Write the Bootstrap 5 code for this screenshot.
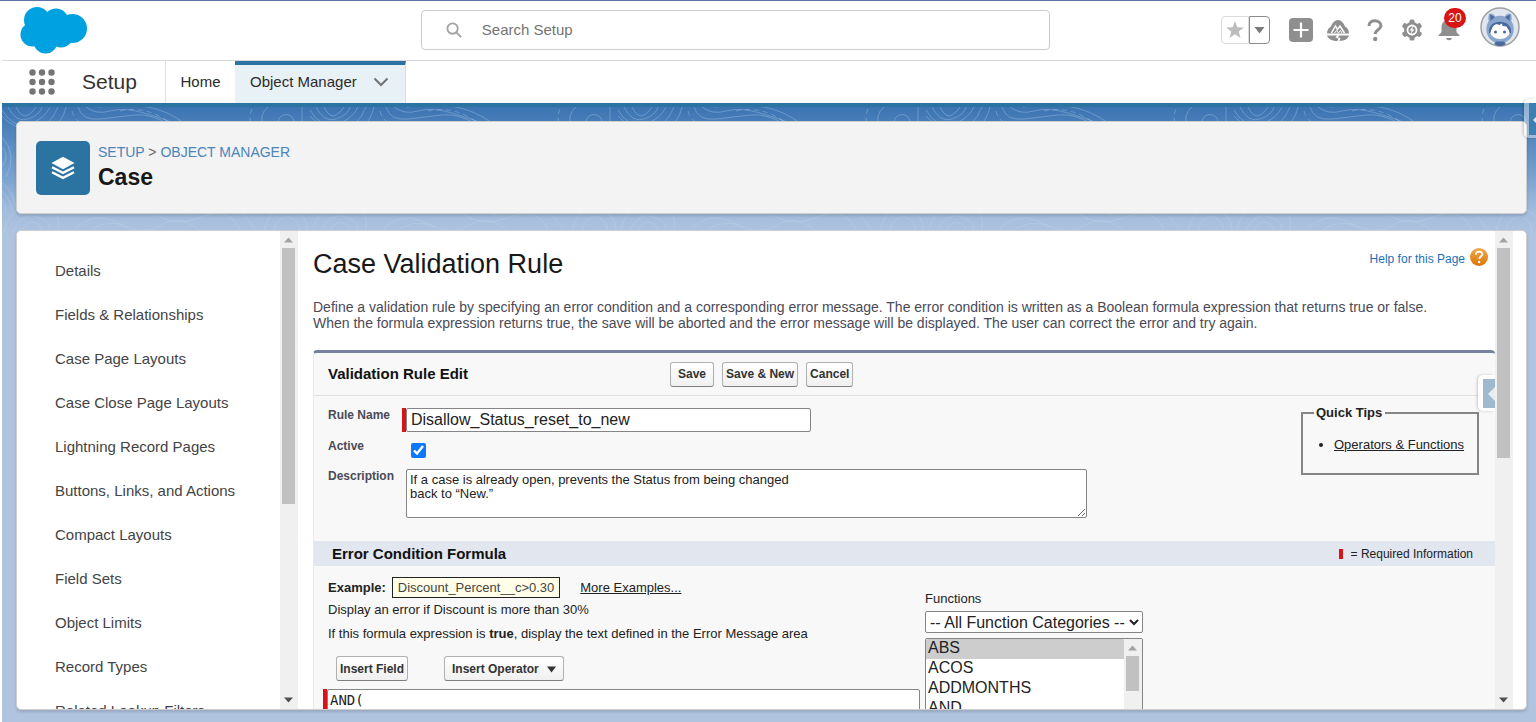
<!DOCTYPE html>
<html lang="en">
<head>
<meta charset="utf-8">
<meta name="viewport" content="width=device-width, initial-scale=1">
<title>Case Validation Rule</title>
<link href="https://cdn.jsdelivr.net/npm/bootstrap@5.3.0/dist/css/bootstrap.min.css" rel="stylesheet">
<style>
  body { font-family: "Liberation Sans", Arial, sans-serif; font-size: 13px; line-height: 16px; color: #222; background: #fff; }
  .app { height: 100vh; min-height: 600px; border-top: 1px solid #5f72a2; }
  .stage { margin-left: 2px; min-height: 0; }

  .topbar { display: grid; grid-template-columns: 27.3% 41% 1fr; height: 60px; flex-shrink: 0; border-bottom: 1px solid #d8d8d8; }
  .cloud { width: 70px; height: 50px; margin: 4px 0 0 17px; }
  .searchbox { height: 40px; margin-top: 9px; border: 1px solid #cbcbcb; border-radius: 4px; padding: 0 24px; }
  .searchbox input { border: 0; outline: 0; font-size: 15px; color: #555; }
  .searchbox input::placeholder { color: #747474; opacity: 1; }
  .tools { padding: 6px 16px 0 0; height: 46px; }
  .tools button, .launcher { border: 0; background: none; padding: 0; }
  .tools .tool { width: 37px; height: 40px; padding-top: 6px; line-height: 0; }
  .tools .favs { padding: 6px 12px 0 0; }
  .tools .fav { height: 28px; width: 28px; border: 1px solid #dcdcdc; border-radius: 4px 0 0 4px; line-height: 0; }
  .tools .favmenu { height: 28px; width: 21px; border: 1px solid #8c8c8c; border-radius: 0 4px 4px 0; line-height: 0; }
  .tools .me-pic { margin-left: 13px; }
  .count { top: 1px; right: 1px; min-width: 22px; height: 20px; border-radius: 10px; background: #d81414; color: #fff; font-size: 12px; line-height: 20px; }

  .tabs { height: 42px; font-size: 15px; }
  .tabs a { color: #2b2b2b; text-decoration: none; }
  .launcher { margin: 0 26px; line-height: 0; }
  .appname { font-size: 21px; width: 83px; color: #333; }
  .tab-home { width: 70px; border-left: 1px solid #e2e2e2; }
  .tab-on { width: 171px; background: #e8f1f6; border-top: 4px solid #2b73a1; border-right: 1px solid #dcdcdc; padding: 0 16px 4px 15px; }

  .backdrop { border-top: 4px solid #2b73a1; background: linear-gradient(#3b74b2, #6f9bcb 60px, #a3bcdd 104px, #b0c4df 130px, #b0c4df); padding: 14px 9px 12px 14px; min-height: 0; overflow: hidden; }
  .contours { top: 0; left: 0; width: 100%; height: 150px; }
  .sheet { border: 1px solid #cfcfcf; border-radius: 5px; box-shadow: 0 2px 3px rgba(0,0,0,.15); }
  .titlecard { background: #f3f3f3; height: 93px; padding: 0 19px; margin-bottom: 16px; }
  .tile { width: 54px; height: 54px; border-radius: 5px; background: #2b73a1; }
  .crumb { font-size: 14px; color: #666; line-height: 16px; }
  .crumb a { color: #4a84bb; text-decoration: none; }
  .titlecard h1 { font-size: 23px; line-height: 28px; font-weight: 700; color: #181818; margin: 3px 0 0; }

  .workspace { background: #fff; min-height: 0; overflow: hidden; }
  .side { width: 281px; }
  .side nav { padding: 30px 10px 0 38px; }
  .side a { display: block; height: 20px; line-height: 20px; margin-bottom: 24px; font-size: 15px; color: #444; text-decoration: none; white-space: nowrap; }
  .scroller { width: 18px; background: #f0f0f0; padding: 6px 3px 6px 2px; flex: none; }
  .scroller svg { display: block; margin: 0 auto; flex: none; }
  .scroller.outer { margin-right: 13px; }
  .thumb { background: #c1c1c1; width: 13px; margin-top: 5px; }

  .detail { padding: 0 0 0 15px; overflow: hidden; }
  .detail h2 { font-size: 27px; line-height: 34px; margin: 0; color: #181818; }
  .helplink { font-size: 12px; color: #1b6fb5; text-decoration: none; padding-right: 6px; }
  .lede { font-size: 14px; line-height: 16px; color: #4a4a56; margin: 18px 0 19px; white-space: nowrap; }
  .panel { background: #f8f8f8; border-top: 3px solid #7682a0; border-left: 1px solid #eaeaea; border-radius: 4px 4px 0 0; height: 500px; }
  .panelhead { height: 43px; border-bottom: 1px solid #e2e2e2; padding: 0 14px; }
  .panelhead h3 { font-size: 15px; font-weight: 700; margin: 0; width: 342px; color: #111; }
  .cbtn { height: 25px; padding: 0 3px; border: 1px solid #b0b0b0; border-bottom-color: #7f7f7f; border-radius: 3px; background: linear-gradient(#fff, #f0f0f0); font-size: 12px; font-weight: 700; color: #333; line-height: 16px; }
  .cbtn.roomy { padding: 0 7px; }
  .fields { display: grid; grid-template-columns: 74px 1fr; grid-template-rows: 31px 30px auto; height: 145px; padding: 12px 14px 0; align-content: start; }
  .fields label { font-size: 12px; font-weight: 700; color: #4a4a56; line-height: 14px; }
  .req { width: 4px; background: #d8141b; flex: none; }
  .box { border: 1px solid #858585; border-radius: 2px; background: #fff; color: #222; }
  .rulename { width: 405px; height: 24px; font-size: 16px; padding: 0 4px; }
  .tick { width: 15px; height: 15px; margin: 4px 0 0 9px; accent-color: #0d78ff; }
  .desc { width: 681px; height: 49px; font-size: 13px; line-height: 14px; padding: 3px; display: block; }
  .tips { top: 53px; right: 16px; width: 178px; height: 69px; border: 2px solid #858585; padding: 0 0 0 31px; }
  .tips legend { float: none; width: auto; font-size: 13px; line-height: 14px; font-weight: 700; margin: 0 0 0 -20px; padding: 0 3px 0 2px; }
  .tips ul { margin: 17px 0 0; padding: 0; }
  .ink { color: #222; text-decoration: underline; }
  .flyout { top: 22px; right: 0; width: 17px; height: 36px; background: #fff; border-radius: 5px 0 0 5px; box-shadow: -1px 0 3px rgba(0,0,0,.2); padding: 4px 0 3px 5px; border: 0; line-height: 0; }
  .flyout.top-edge { top: 98px; width: 12px; height: 39px; background: rgba(255,255,255,.45); }
  .section { height: 25px; background: #e1e6ef; padding: 0 22px 0 18px; }
  .section h3 { font-size: 15px; font-weight: 700; margin: 0; color: #111; }
  .legend-req { font-size: 12px; }
  .legend-req .req { height: 10px; }
  .formula { display: grid; grid-template-columns: 597px 218px; padding: 11px 0 0 14px; }
  .sample { border: 1px solid #222; background: #fffee8; padding: 1px 5px; height: 21px; line-height: 18px; color: #444; margin: 0 20px 0 6px; }
  .inserts { margin: 14px 0 8px 8px; gap: 36px; }
  .coderow { margin-left: -5px; }
  .code { width: 593px; height: 80px; font: 14px/16px "DejaVu Sans Mono", monospace; padding: 2px; display: block; resize: none; }
  .funcs { padding-top: 14px; }
  .picker { height: 22px; width: 218px; font-size: 16px; padding: 0; }
  .listbox { width: 218px; height: 120px; border: 1px solid #858585; border-radius: 2px; background: #fff; margin-top: 5px; overflow: hidden; }
  .listbox select { border: 0; outline: 0; background: #fff; font-size: 16px; overflow: hidden; padding: 0; height: 120px; color: #222; }
  .listbox option { height: 20px; line-height: 20px; min-height: 20px; padding: 0 2px; }
  .listbox option:checked { background: #cdcdcd linear-gradient(#cdcdcd, #cdcdcd); color: #222; }
</style>
</head>
<body>
<div class="app d-flex flex-column overflow-hidden position-relative">
  <div class="stage d-flex flex-column flex-grow-1">
    <header class="topbar">
      <svg class="cloud" viewBox="0 0 70 50" fill="#00a1e0" role="img" aria-label="Salesforce">
        <circle cx="18" cy="15" r="13"/><circle cx="37" cy="16" r="12.500"/><circle cx="53.500" cy="23.500" r="14.500"/>
        <circle cx="13.500" cy="29.500" r="12"/><circle cx="26.500" cy="36.500" r="12"/><circle cx="42" cy="30" r="12.500"/><path d="M16 12h30v26H16z"/>
      </svg>
      <label class="searchbox d-flex align-items-center">
        <svg width="16" height="16" viewBox="0 0 17 17" fill="none" stroke="#a3a3a3" stroke-width="2"><circle cx="7" cy="7" r="5.500"/><path d="M11 11l5 5"/></svg>
        <input class="flex-grow-1 ms-3 ps-1" type="search" placeholder="Search Setup" aria-label="Search Setup">
      </label>
      <div class="tools d-flex align-items-center justify-content-end">
        <div class="favs d-flex">
          <button class="fav" aria-label="Favorite"><svg width="20" height="20" viewBox="0 0 20 20" fill="#bcbcbc"><path d="M10 1l2.300 6.200 6.600.3-5.200 4.100 1.800 6.400-5.500-3.700L4.500 18l1.800-6.400L1.100 7.500l6.600-.3z"/></svg></button>
          <button class="favmenu" aria-label="Favorites list"><svg width="11" height="8" viewBox="0 0 11 8" fill="#7a7a7a"><path d="M.5 1h10L5.500 7.500z"/></svg></button>
        </div>
        <button class="tool" aria-label="Add"><svg width="24" height="24" viewBox="0 0 24 24"><rect width="24" height="24" rx="4" fill="#8f8f8f"/><path d="M12 4.500v15M4.500 12h15" stroke="#fff" stroke-width="2.200"/></svg></button>
        <button class="tool" aria-label="Guidance"><svg width="24" height="24" viewBox="0 0 24 24" fill="#8f8f8f"><path d="M1 15.500C1 12 3 9.500 5 8.500 6 5 9 2 12 2s6 3 7 6.500c2 1 4 3.500 4 7z"/><path d="M5.500 15l4-7 2 3.500L14 8l4.500 7" fill="none" stroke="#fff" stroke-width="1.500"/><path d="M8.500 15l2-2.500 2 2.500 2-2.500 1.500 2.500" fill="none" stroke="#fff"/><path d="M1 17.500h10l-1.500 2 3 1-1 2.500c-5 0-9-1.500-10.500-5.500zM13 17.500h10c-1.300 3.500-4 5-9.500 5.500l1-3-2.500-.5z"/></svg></button>
        <button class="tool" aria-label="Help"><svg width="18" height="24" viewBox="0 0 18 24"><path d="M3 8C3 4 6 2.800 9 2.800s6 2 6 5c0 4-5.800 4-5.800 8.200" fill="none" stroke="#8f8f8f" stroke-width="3"/><circle cx="9.200" cy="21" r="2.200" fill="#8f8f8f"/></svg></button>
        <button class="tool" aria-label="Setup"><svg width="24" height="24" viewBox="0 0 24 24"><g fill="#8f8f8f"><circle cx="12" cy="12" r="8"/><g id="cog"><rect x="9.500" y="1.500" width="5" height="21" rx="1.500"/></g><use href="#cog" transform="rotate(60 12 12)"/><use href="#cog" transform="rotate(120 12 12)"/></g><circle cx="12" cy="12" r="4.500" fill="#8f8f8f" stroke="#fff" stroke-width="1.800"/><path d="M13 8.500l-3.500 4h2L11 15.500l3.500-4h-2z" fill="#fff"/></svg></button>
        <button class="tool position-relative" aria-label="Notifications"><svg width="24" height="24" viewBox="0 0 24 24" fill="#8f8f8f"><path d="M4.500 9C4.500 4.500 8 2 12 2s7.500 2.500 7.500 7v4.500c0 2 3 2.500 3 4.500h-21c0-2 3-2.500 3-4.500zM9 20h6c-.5 3-5.500 3-6 0z"/></svg><span class="count position-absolute">20</span></button>
        <button class="me-pic" aria-label="Profile"><svg class="d-block" width="40" height="40" viewBox="0 0 40 40"><circle cx="20" cy="20" r="19" fill="#dfe6ef" stroke="#a0a0a0" stroke-width="1.500"/><path d="M9 7c2-1.500 5 0 6 2.500q5-1.500 10 0C26 7 29 5.500 31 7c1 3 .8 5 .3 7 3.500 5 3.500 13-1.300 18q-4.500 4.500-10 4.500T10 32C5.500 27 5.500 19 8.700 14 8.200 12 8 10 9 7z" fill="#8ba6cc"/><path d="M10 7.500l5 2.500-4.500 4zM30 7.500L25 10l4.500 4z" fill="#4b6a9e"/><path d="M9 26c-2-15 24-15 22 0z" fill="#4b6a9e"/><ellipse cx="20" cy="25.500" rx="9.500" ry="6.500" fill="#fff"/><path d="M11.500 24c.5-5 4-8 8-6l2.500-1.500.5 2.500 4 .5 2.500 5z" fill="#fff"/><circle cx="15.500" cy="25" r="1.500" fill="#4b6a9e"/><circle cx="24.500" cy="25" r="1.500" fill="#4b6a9e"/><path d="M16 34.500h8l2 2.500-4 2h-4l-4-2z" fill="#4b6a9e"/></svg></button>
      </div>
    </header>

    <nav class="tabs d-flex flex-shrink-0">
      <button class="launcher" aria-label="App Launcher"><svg width="28" height="28" viewBox="0 0 28 28" fill="#747474"><g id="dots"><circle cx="4.500" cy="4.500" r="3.200"/><circle cx="14" cy="4.500" r="3.200"/><circle cx="23.500" cy="4.500" r="3.200"/></g><use href="#dots" y="9.500"/><use href="#dots" y="19"/></svg></button>
      <div class="appname d-flex align-items-center">Setup</div>
      <a href="#" class="tab-home d-flex align-items-center justify-content-center">Home</a>
      <a href="#" class="tab-on d-flex align-items-center justify-content-between">Object Manager<svg width="16" height="10" viewBox="0 0 16 10" fill="none" stroke="#747474" stroke-width="2"><path d="M1.500 1.500L8 8l6.500-6.500"/></svg></a>
    </nav>

    <main class="backdrop d-flex flex-column flex-grow-1 position-relative">
      <svg class="contours position-absolute" aria-hidden="true">
        <defs><pattern id="topo" width="308" height="150" patternUnits="userSpaceOnUse">
          <g fill="none" stroke="#c3d8ee" stroke-opacity=".32" stroke-width="1">
            <path d="M0 3q10 18 26 14T48 0M0 9q12 14 30 13T56 0M6 0q8 16 20 12T40 0M14 0q6 12 12 8t8-8M64 0q-6 26-34 28"/>
            <path d="M76 0q4 14 22 12t34-4 36 10M84 0q10 8 24 4t34 2 30 10M96 0q30-4 50 0t36 16"/>
            <path d="M70 4q4 16 26 14t40 4" stroke-dasharray="5 4"/><path d="M118 4q26-6 50 12M250 2q-4 8 0 16" stroke-dasharray="5 4"/>
            <path d="M266 0q-10 8-4 22M276 18c-2-12 14-14 16-4 0 6-6 8-12 4M300 0v20"/>
            <path d="M10 126q10-22 26-16t10 16M18 126q8-14 16-10t4 10M2 126q6-30 34-26t18 26M70 126q20-24 46-10t44 2 40 8M84 126q20-16 40-6M150 104q20 18 50 6t40 18M160 100q24 14 50 2t46 26M270 126q8-20 18-16t10 16M262 126q4-26 24-24t20 24"/>
            <path d="M0 40q8 8 0 20M0 30q16 18 4 40M0 76q10 6 14 24M0 84q8 8 10 20M0 92q4 6 4 14"/>
          </g></pattern></defs>
        <rect width="100%" height="150" fill="url(#topo)"/>
      </svg>

      <section class="sheet titlecard d-flex align-items-center flex-shrink-0 position-relative">
        <div class="tile d-flex align-items-center justify-content-center">
          <svg width="24" height="24" viewBox="0 0 24 24"><path d="M12 .8L23.500 7 12 13.200.5 7z" fill="#fff"/><path d="M1 11.200l11 5.600 11-5.600M1 16.200l11 5.600 11-5.600" fill="none" stroke="#fff" stroke-width="2.400"/></svg>
        </div>
        <div class="ms-2">
          <div class="crumb"><a href="#">SETUP</a> &gt; <a href="#">OBJECT MANAGER</a></div>
          <h1>Case</h1>
        </div>
      </section>

      <section class="sheet workspace d-flex flex-grow-1 position-relative">
        <aside class="side d-flex flex-shrink-0">
          <nav class="flex-grow-1 overflow-hidden">
            <a href="#">Details</a><a href="#">Fields &amp; Relationships</a><a href="#">Case Page Layouts</a><a href="#">Case Close Page Layouts</a><a href="#">Lightning Record Pages</a><a href="#">Buttons, Links, and Actions</a><a href="#">Compact Layouts</a><a href="#">Field Sets</a><a href="#">Object Limits</a><a href="#">Record Types</a><a href="#">Related Lookup Filters</a>
          </nav>
          <div class="scroller d-flex flex-column" aria-hidden="true">
            <svg width="9" height="6" viewBox="0 0 9 6" fill="#a3a3a3"><path d="M0 5.500h9L4.500.5z"/></svg>
            <div class="thumb" style="height:55%"></div>
            <svg class="mt-auto" width="9" height="6" viewBox="0 0 9 6" fill="#505050"><path d="M0 .5h9L4.500 5.500z"/></svg>
          </div>
        </aside>

        <div class="detail flex-grow-1">
          <div class="d-flex justify-content-between pt-3">
            <h2>Case Validation Rule</h2>
            <a href="#" class="helplink d-flex align-items-start"><span class="mt-1">Help for this Page</span><svg class="ms-1" width="20" height="20" viewBox="0 0 20 20"><defs><linearGradient id="amber" x2="0" y2="1"><stop stop-color="#f0a848"/><stop offset="1" stop-color="#dc7508"/></linearGradient></defs><circle cx="10" cy="10" r="9" fill="url(#amber)"/><path d="M6.800 7.800c0-4.500 6.500-3.800 6.500-.6 0 2.300-3 2.400-3 4.900" fill="none" stroke="#fff" stroke-width="1.800"/><circle cx="10.200" cy="15" r="1.200" fill="#fff"/></svg></a>
          </div>
          <p class="lede">Define a validation rule by specifying an error condition and a corresponding error message. The error condition is written as a Boolean formula expression that returns true or false.<br>When the formula expression returns true, the save will be aborted and the error message will be displayed. The user can correct the error and try again.</p>

          <form class="panel position-relative" onsubmit="return false">
            <div class="panelhead d-flex align-items-center">
              <h3>Validation Rule Edit</h3>
              <button class="cbtn roomy">Save</button>
              <button class="cbtn mx-2">Save &amp; New</button>
              <button class="cbtn">Cancel</button>
            </div>
            <div class="fields">
              <label for="rn">Rule Name</label>
              <div class="d-flex align-items-start"><span class="req" style="height:24px"></span><input id="rn" class="box rulename" value="Disallow_Status_reset_to_new"></div>
              <label for="ac">Active</label>
              <div><input id="ac" class="tick" type="checkbox" checked></div>
              <label for="ds">Description</label>
              <div class="ps-1"><textarea id="ds" class="box desc">If a case is already open, prevents the Status from being changed
back to “New.”</textarea></div>
            </div>
            <fieldset class="tips position-absolute">
              <legend>Quick Tips</legend>
              <ul><li><a href="#" class="ink">Operators &amp; Functions</a></li></ul>
            </fieldset>
            <button class="flyout position-absolute" aria-label="Open sidebar"><svg width="12" height="29" viewBox="0 0 12 29"><path fill="#9fb9cf" d="M0 0h12v29H0z"/><path d="M12 8v14l-7-7z" fill="#e8edf2"/></svg></button>

            <div class="section d-flex align-items-center justify-content-between">
              <h3>Error Condition Formula</h3>
              <div class="legend-req d-flex align-items-center"><span class="req me-2"></span>= Required Information</div>
            </div>
            <div class="formula">
              <div>
                <div class="d-flex align-items-center"><b>Example:</b><span class="sample">Discount_Percent__c&gt;0.30</span><a href="#" class="ink">More Examples...</a></div>
                <div class="mt-1">Display an error if Discount is more than 30%</div>
                <div class="mt-2">If this formula expression is <b>true</b>, display the text defined in the Error Message area</div>
                <div class="inserts d-flex">
                  <button class="cbtn">Insert Field</button>
                  <button class="cbtn roomy">Insert Operator<svg class="ms-2" width="9" height="7" viewBox="0 0 9 7" fill="#333"><path d="M0 .5h9L4.500 6.500z"/></svg></button>
                </div>
                <div class="coderow d-flex"><span class="req"></span><textarea class="box code" aria-label="Formula">AND(</textarea></div>
              </div>
              <div class="funcs">
                <label class="d-block" for="cat">Functions</label>
                <select id="cat" class="box picker mt-1"><option>-- All Function Categories --</option></select>
                <div class="listbox d-flex">
                  <select size="6" class="flex-grow-1" aria-label="Function"><option selected>ABS</option><option>ACOS</option><option>ADDMONTHS</option><option>AND</option><option>ASCII</option><option>ASIN</option></select>
                  <div class="scroller d-flex flex-column" aria-hidden="true"><svg width="9" height="6" viewBox="0 0 9 6" fill="#a3a3a3"><path d="M0 5.500h9L4.500.5z"/></svg><div class="thumb" style="height:33%"></div></div>
                </div>
              </div>
            </div>
          </form>
        </div>
        <div class="scroller outer d-flex flex-column" aria-hidden="true">
          <svg width="9" height="6" viewBox="0 0 9 6" fill="#a3a3a3"><path d="M0 5.500h9L4.500.5z"/></svg>
          <div class="thumb" style="height:45%"></div>
          <svg class="mt-auto" width="9" height="6" viewBox="0 0 9 6" fill="#505050"><path d="M0 .5h9L4.500 5.500z"/></svg>
        </div>
      </section>
    </main>
  </div>
  <button class="flyout top-edge position-absolute" aria-label="Open help panel"><svg width="7" height="32" viewBox="0 0 7 32"><path fill="#3c7fb0" d="M0 0h7v32H0z"/><path d="M7 14v6l-3-3z" fill="#dfe8f2"/></svg></button>
</div>
<script src="https://cdn.jsdelivr.net/npm/bootstrap@5.3.0/dist/js/bootstrap.bundle.min.js"></script>
</body>
</html>
